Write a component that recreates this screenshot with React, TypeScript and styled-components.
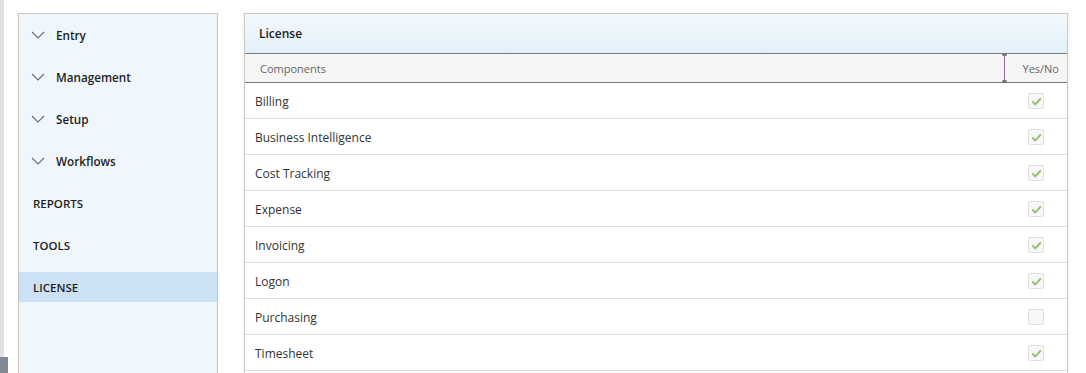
import React, { FC } from "react"
import styled, { createGlobalStyle } from "styled-components"

const GlobalStyle = createGlobalStyle`
    html, body {
        margin: 0;
        padding: 0;
        background: #ffffff;
        font-family: "Open Sans", "Liberation Sans", sans-serif;
        overflow: hidden;
    }
`

const Page = styled.div`
    position: relative;
    display: flex;
    align-items: flex-start;
    height: 373px;
    padding-top: 13px;
    box-sizing: border-box;
    overflow: hidden;
`

const EdgeStrip = styled.div`
    width: 4px;
    align-self: stretch;
    margin-top: -13px;
    margin-right: 14px;
    background: #e2e2e2;
`

const EdgeTab = styled.div`
    position: absolute;
    left: 0;
    bottom: 0;
    width: 8px;
    height: 16px;
    background: #7f8a94;
`

const Sidebar = styled.nav`
    width: 198px;
    height: 400px;
    border: 1px solid #c4c4c4;
    background: #f0f7fc;
    display: flex;
    flex-direction: column;
`

const NavItem = styled.div<{ $active?: boolean; $group?: boolean }>`
    height: ${(p) => (p.$active ? "30px" : "42px")};
    margin: ${(p) => (p.$active ? "6px 0" : "0")};
    display: flex;
    align-items: center;
    gap: 11px;
    padding-left: ${(p) => (p.$group ? "12px" : "14px")};
    background: ${(p) => (p.$active ? "#cde1f5" : "transparent")};
    font-weight: 600;
    color: #1e1e1e;
`

const NavLabel = styled.span<{ $upper?: boolean }>`
    text-transform: ${(p) => (p.$upper ? "uppercase" : "none")};
    font-size: ${(p) => (p.$upper ? "11.5px" : "11.7px")};
`

const Chevron = () => (
    <svg width="14" height="8" viewBox="0 0 14 8" fill="none">
        <path d="M1 1l6 6 6-6" stroke="#6b6b6b" strokeWidth="1.1" />
    </svg>
)

const Main = styled.section`
    margin-left: 26px;
    width: 822px;
    height: 400px;
    border: 1px solid #c8c8c8;
    box-shadow: 0 0 3px rgba(0, 0, 0, 0.08);
    background: #ffffff;
    display: flex;
    flex-direction: column;
`

const PanelHeader = styled.div`
    height: 39px;
    display: flex;
    align-items: center;
    padding-left: 14px;
    background: linear-gradient(#f3f9fd, #e2f0f9);
    border-bottom: 1px solid #7a7a7a;
    font-size: 12px;
    font-weight: 600;
    color: #1a1a1a;
`

const ColumnRow = styled.div`
    height: 28px;
    display: flex;
    align-items: center;
    background: #f5f5f5;
    border-bottom: 1px solid #7a7a7a;
    font-size: 11px;
    color: #666666;
`

const NameColumn = styled.div`
    flex: 1;
    padding-left: 15px;
`

const Resizer = styled.div`
    position: relative;
    width: 1px;
    align-self: stretch;
    background: #8c6f9e;
    &::before,
    &::after {
        content: "";
        position: absolute;
        left: -2px;
        width: 5px;
        height: 3px;
        background: #777;
        border-radius: 2px;
    }
    &::before { top: -1px; }
    &::after { bottom: -1px; }
`

const ValueColumn = styled.div`
    width: 62px;
    text-align: right;
    padding-right: 8px;
    box-sizing: border-box;
`

const Row = styled.div`
    height: 35px;
    display: flex;
    align-items: center;
    padding-top: 1px;
    box-sizing: border-box;
    height: 36px;
    border-bottom: 1px solid #dedede;
    font-size: 12px;
    color: #333333;
`

const RowName = styled.div`
    flex: 1;
    padding-left: 10px;
`

const CheckCell = styled.div`
    width: 62px;
    display: flex;
    justify-content: flex-start;
    padding-left: 23px;
    box-sizing: border-box;
`

const Box = styled.div`
    width: 14px;
    height: 14px;
    border: 1px solid #e0e0e0;
    border-radius: 2px;
    background: #f7f7f7;
    display: flex;
    align-items: center;
    justify-content: center;
`

const Check = () => (
    <svg width="11" height="9" viewBox="0 0 11 9" fill="none">
        <path d="M1.3 4.4l3 3L9.8 1.5" stroke="#8cc46b" strokeWidth="1.9" />
    </svg>
)

const groups = ["Entry", "Management", "Setup", "Workflows"]
const sections = ["Reports", "Tools"]

const components = [
    { name: "Billing", on: true },
    { name: "Business Intelligence", on: true },
    { name: "Cost Tracking", on: true },
    { name: "Expense", on: true },
    { name: "Invoicing", on: true },
    { name: "Logon", on: true },
    { name: "Purchasing", on: false },
    { name: "Timesheet", on: true },
]

const App: FC = () => (
    <Page>
        <GlobalStyle />
        <EdgeStrip />
        <EdgeTab />
        <Sidebar>
            {groups.map((g) => (
                <NavItem key={g} $group>
                    <Chevron />
                    <NavLabel>{g}</NavLabel>
                </NavItem>
            ))}
            {sections.map((s) => (
                <NavItem key={s}>
                    <NavLabel $upper>{s}</NavLabel>
                </NavItem>
            ))}
            <NavItem $active>
                <NavLabel $upper>License</NavLabel>
            </NavItem>
        </Sidebar>
        <Main>
            <PanelHeader>License</PanelHeader>
            <ColumnRow>
                <NameColumn>Components</NameColumn>
                <Resizer />
                <ValueColumn>Yes/No</ValueColumn>
            </ColumnRow>
            {components.map((c) => (
                <Row key={c.name}>
                    <RowName>{c.name}</RowName>
                    <CheckCell>
                        <Box>{c.on && <Check />}</Box>
                    </CheckCell>
                </Row>
            ))}
        </Main>
    </Page>
)

export default App
